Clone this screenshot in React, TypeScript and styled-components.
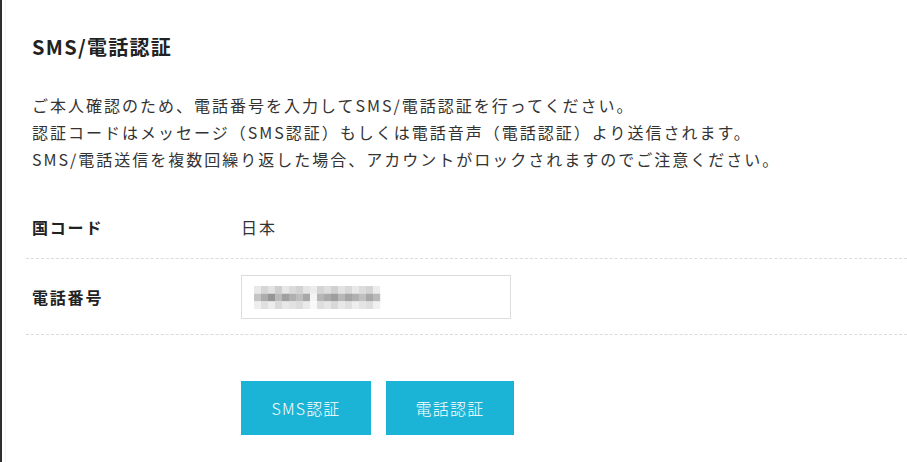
import React from "react";
import styled, { createGlobalStyle } from "styled-components";

const Global = createGlobalStyle`
  html, body { margin: 0; padding: 0; background: #fff; }
  body {
    font-family: "Noto Sans CJK JP", "Noto Sans", sans-serif;
    color: #333;
  }
`;

const Frame = styled.div`
  box-sizing: border-box;
  min-height: 462px;
  border-left: 2px solid #2e2e2e;
  padding-left: 3px;
`;

const Panel = styled.div`
  box-sizing: border-box;
  min-height: 462px;
  border-left: 1px solid #f2f2f2;
  padding: 34px 0 0 20px;
`;

const Title = styled.h1`
  margin: 0 0 0 6px;
  font-size: 20px;
  line-height: 26px;
  font-weight: 700;
  letter-spacing: 1.3px;
  color: #222;
`;

const Description = styled.p`
  margin: 32px 0 0 6px;
  font-size: 16px;
  line-height: 27px;
  letter-spacing: 2px;
  color: #333;
`;

const Form = styled.div`
  margin-top: 22px;
`;

const Row = styled.div`
  display: grid;
  grid-template-columns: 209px 1fr;
  align-items: center;
  padding: 16px 0 15px 6px;
  border-bottom: 1px dashed #dcdcdc;
`;

const Label = styled.div`
  font-size: 16px;
  font-weight: 700;
  line-height: 32px;
  letter-spacing: 1.8px;
  color: #222;
`;

const Value = styled.div`
  font-size: 16px;
  line-height: 32px;
  letter-spacing: 2px;
  color: #333;
`;

const InputBox = styled.div`
  box-sizing: border-box;
  width: 270px;
  height: 44px;
  border: 1px solid #dcdcdc;
  display: flex;
  align-items: center;
  padding-left: 12px;
`;

const Buttons = styled.div`
  display: flex;
  gap: 15px;
  margin: 46px 0 0 215px;
`;

const Button = styled.button<{ $w: number }>`
  width: ${(p) => p.$w}px;
  height: 54px;
  border: none;
  background: #1bb4d6;
  color: #fff;
  font-family: "Noto Sans CJK JP", "Noto Sans", sans-serif;
  font-size: 16px;
  font-weight: 300;
  letter-spacing: 1.2px;
  cursor: pointer;
`;

const shades = [
  [232, 214, 226, 206, 230, 218, 210, 228, 236, 212, 222, 208, 226, 216, 232, 220, 212, 236],
  [196, 172, 150, 186, 160, 176, 190, 168, 244, 182, 170, 158, 184, 164, 176, 192, 168, 186],
  [238, 224, 236, 218, 232, 226, 220, 234, 248, 222, 230, 216, 232, 224, 238, 228, 222, 240],
];

const Mosaic = () => (
  <svg width="127" height="23" viewBox="0 0 127 23" aria-hidden>
    {shades.map((row, r) =>
      row.map((v, c) => (
        <rect
          key={`${r}-${c}`}
          x={c * 7}
          y={r * 7.7}
          width={7.2}
          height={7.8}
          fill={`rgb(${v},${v},${v})`}
        />
      ))
    )}
  </svg>
);

export default function App() {
  return (
    <>
      <Global />
      <Frame>
        <Panel>
          <Title>SMS/電話認証</Title>
          <Description>
            ご本人確認のため、電話番号を入力してSMS/電話認証を行ってください。
            <br />
            認証コードはメッセージ（SMS認証）もしくは電話音声（電話認証）より送信されます。
            <br />
            SMS/電話送信を複数回繰り返した場合、アカウントがロックされますのでご注意ください。
          </Description>
          <Form>
            <Row>
              <Label>国コード</Label>
              <Value>日本</Value>
            </Row>
            <Row>
              <Label>電話番号</Label>
              <div>
                <InputBox>
                  <Mosaic />
                </InputBox>
              </div>
            </Row>
          </Form>
          <Buttons>
            <Button $w={130}>SMS認証</Button>
            <Button $w={128}>電話認証</Button>
          </Buttons>
        </Panel>
      </Frame>
    </>
  );
}
